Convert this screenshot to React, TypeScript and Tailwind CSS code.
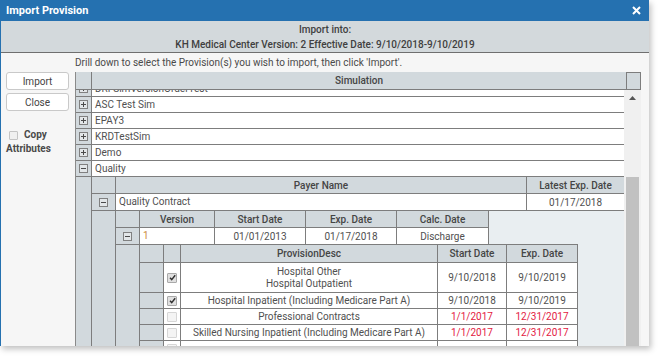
import React from "react";

const L = "border-[#7d7d7d]";
const G = "bg-[#d2d9dd]";

function Exp({ minus = false }: { minus?: boolean }) {
  return (
    <svg width="9" height="9" viewBox="0 0 9 9" className="block">
      <rect x="0.5" y="0.5" width="8" height="8" fill="#e2e6e8" stroke="#808080" />
      <path d="M2 4.5H7" stroke="#4a4a4a" />
      {!minus && <path d="M4.5 2V7" stroke="#4a4a4a" />}
    </svg>
  );
}

function Box({ checked }: { checked: boolean }) {
  return checked ? (
    <span className="w-[10px] h-[10px] rounded-[1px] border border-[#a9a9a9] bg-[#e0e0e0] flex items-center justify-center">
      <svg width="7" height="7" viewBox="0 0 7 7" className="block">
        <path d="M1 3.8L2.7 5.6L6.2 1.2" fill="none" stroke="#2f2f2f" strokeWidth="1.4" />
      </svg>
    </span>
  ) : (
    <span className="w-[10px] h-[10px] rounded-[1px] border border-[#d6d6d6] bg-[#f4f4f4]" />
  );
}

function SimRow({ label, minus = false }: { label: string; minus?: boolean }) {
  return (
    <div className={`flex h-[16px] shrink-0 border-b ${L}`}>
      <div className={`w-[16px] shrink-0 ${G} border-r ${L} flex items-center justify-center`}>
        <Exp minus={minus} />
      </div>
      <div className="flex-1 bg-white pl-[3px] leading-[15px] whitespace-nowrap overflow-hidden">{label}</div>
    </div>
  );
}

type Prov = { desc: React.ReactNode; start: string; exp: string; checked: boolean; red?: boolean; h: string };

function ProvRow({ p }: { p: Prov }) {
  const dateCls = p.red ? "text-[#e3203f]" : "text-[#505050]";
  return (
    <div className={`flex ${p.h} border-b ${L}`}>
      <div className={`w-[24px] shrink-0 ${G} border-r ${L}`} />
      <div className={`w-[17px] shrink-0 bg-white border-r ${L} flex items-center justify-center`}>
        <Box checked={p.checked} />
      </div>
      <div className={`w-[257px] shrink-0 bg-white border-r ${L} flex items-center justify-center text-center leading-[12px] whitespace-nowrap overflow-hidden`}>
        {p.desc}
      </div>
      <div className={`w-[69px] shrink-0 bg-white border-r ${L} flex items-center justify-center ${dateCls}`}>{p.start}</div>
      <div className={`w-[71px] shrink-0 bg-white border-r ${L} flex items-center justify-center ${dateCls}`}>{p.exp}</div>
    </div>
  );
}

function ProvisionTable() {
  const rows: Prov[] = [
    {
      desc: (
        <div>
          <div>Hospital Other</div>
          <div>Hospital Outpatient</div>
        </div>
      ),
      start: "9/10/2018",
      exp: "9/10/2019",
      checked: true,
      h: "h-[30px]",
    },
    { desc: "Hospital Inpatient (Including Medicare Part A)", start: "9/10/2018", exp: "9/10/2019", checked: true, h: "h-[16px]" },
    { desc: "Professional Contracts", start: "1/1/2017", exp: "12/31/2017", checked: false, red: true, h: "h-[16px]" },
    { desc: "Skilled Nursing Inpatient (Including Medicare Part A)", start: "1/1/2017", exp: "12/31/2017", checked: false, red: true, h: "h-[16px]" },
    { desc: "", start: "", exp: "", checked: false, h: "h-[16px]" },
    { desc: "", start: "", exp: "", checked: false, h: "h-[16px]" },
  ];
  return (
    <div className="w-[438px] -mt-px flex flex-col">
      <div className={`flex h-[19px] border-t border-b ${L} ${G} font-medium text-[#454545]`}>
        <div className={`w-[24px] shrink-0 border-r ${L}`} />
        <div className={`w-[17px] shrink-0 border-r ${L}`} />
        <div className={`w-[257px] shrink-0 border-r ${L} flex items-center justify-center`}>ProvisionDesc</div>
        <div className={`w-[69px] shrink-0 border-r ${L} flex items-center justify-center`}>Start Date</div>
        <div className={`w-[71px] shrink-0 border-r ${L} flex items-center justify-center`}>Exp. Date</div>
      </div>
      {rows.map((p, i) => (
        <ProvRow key={i} p={p} />
      ))}
    </div>
  );
}

function VersionTable() {
  return (
    <div className="w-[373px] flex flex-col">
      <div className={`flex h-[17px] border-b ${L} ${G} font-medium text-[#454545]`}>
        <div className={`w-[24px] shrink-0 border-r ${L}`} />
        <div className={`w-[75px] shrink-0 border-r ${L} flex items-center justify-center`}>Version</div>
        <div className={`w-[91px] shrink-0 border-r ${L} flex items-center justify-center`}>Start Date</div>
        <div className={`w-[91px] shrink-0 border-r ${L} flex items-center justify-center`}>Exp. Date</div>
        <div className={`w-[92px] shrink-0 border-r ${L} flex items-center justify-center`}>Calc. Date</div>
      </div>
      <div className={`flex h-[17px] border-b ${L}`}>
        <div className={`w-[24px] shrink-0 ${G} border-r ${L} flex items-center justify-center`}>
          <Exp minus />
        </div>
        <div className={`w-[75px] shrink-0 bg-white border-r ${L} pl-[3px] leading-[16px] text-[#cc8a3c]`}>1</div>
        <div className={`w-[91px] shrink-0 bg-white border-r ${L} flex items-center justify-center`}>01/01/2013</div>
        <div className={`w-[91px] shrink-0 bg-white border-r ${L} flex items-center justify-center`}>01/17/2018</div>
        <div className={`w-[92px] shrink-0 bg-white border-r ${L} flex items-center justify-center`}>Discharge</div>
      </div>
      <div className="flex">
        <div className={`w-[24px] shrink-0 ${G} border-r ${L}`} />
        <ProvisionTable />
      </div>
    </div>
  );
}

function PayerTable() {
  return (
    <div className="flex flex-col">
      <div className={`flex h-[17px] border-b ${L} ${G} font-medium text-[#454545]`}>
        <div className={`w-[24px] shrink-0 border-r ${L}`} />
        <div className={`w-[411px] shrink-0 border-r ${L} flex items-center justify-center`}>Payer Name</div>
        <div className="flex-1 flex items-center justify-center">Latest Exp. Date</div>
      </div>
      <div className={`flex h-[17px] border-b ${L}`}>
        <div className={`w-[24px] shrink-0 ${G} border-r ${L} flex items-center justify-center`}>
          <Exp minus />
        </div>
        <div className={`w-[411px] shrink-0 bg-white border-r ${L} pl-[3px] leading-[16px]`}>Quality Contract</div>
        <div className="flex-1 bg-white flex items-center justify-center">01/17/2018</div>
      </div>
      <div className="flex">
        <div className={`w-[24px] shrink-0 ${G} border-r ${L}`} />
        <VersionTable />
      </div>
    </div>
  );
}

export default function App() {
  return (
    <div className="w-[659px] h-[356px] bg-white font-['Roboto',sans-serif] text-[10px] text-[#505050] overflow-hidden">
      <div className="w-[649px] h-[346px] flex flex-col bg-[#f6f6f6] border-l border-[#2571b0] shadow-[2px_3px_6px_rgba(0,0,0,0.25)] overflow-hidden">
        <div className="h-[21px] shrink-0 bg-[#2571b0] flex items-center justify-between pl-[5px] pr-[8px] text-white">
          <span className="text-[11px] font-bold leading-none">Import Provision</span>
          <svg width="9" height="9" viewBox="0 0 9 9" className="block">
            <path d="M1 1L8 8M8 1L1 8" stroke="#ffffff" strokeWidth="2" />
          </svg>
        </div>
        <div className="h-[32px] shrink-0 bg-[#d3d9dc] border-b border-[#6f6f6f] flex flex-col items-center justify-center leading-[15px] font-medium text-[#404040]">
          <div>Import into:</div>
          <div>KH Medical Center Version: 2 Effective Date: 9/10/2018-9/10/2019</div>
        </div>
        <div className="flex-1 flex min-h-0">
          <div className="w-[74px] shrink-0 pt-[19px] pl-[5px] flex flex-col">
            <button className="w-[63px] h-[18px] bg-white border border-[#c9c9c9] rounded-[3px] text-[10px] text-[#444]">
              Import
            </button>
            <button className="w-[63px] h-[18px] mt-[3px] bg-white border border-[#c9c9c9] rounded-[3px] text-[10px] text-[#444]">
              Close
            </button>
            <div className="mt-[17px] font-bold text-[#4a4a4a] leading-[14px]">
              <div className="flex items-center pl-[3px] gap-[6px]">
                <span className="w-[9px] h-[9px] rounded-[1px] border border-[#c4c4c4] bg-[#f0f0f0]" />
                <span>Copy</span>
              </div>
              <div>Attributes</div>
            </div>
          </div>
          <div className="flex-1 flex flex-col min-h-0">
            <div className="h-[19px] shrink-0 leading-[19px] whitespace-nowrap text-[#4a4a4a]">
              Drill down to select the Provision(s) you wish to import, then click 'Import'.
            </div>
            <div className="w-[566px] flex-1 min-h-0 flex flex-col border-l border-[#8a8a8a]">
              <div className="h-[18px] shrink-0 flex">
                <div className={`w-[550px] flex ${G} border-b ${L} font-medium text-[#454545]`}>
                  <div className={`w-[16px] shrink-0 border-r ${L}`} />
                  <div className="flex-1 flex items-center justify-center">Simulation</div>
                </div>
                <div className={`w-[15px] ${G} border ${L}`} />
              </div>
              <div className="flex-1 min-h-0 flex">
                <div className="w-[548px] overflow-hidden">
                  <div className="-mt-[9px] flex flex-col">
                    <SimRow label="DRFSimVersionOrderTest" />
                    <SimRow label="ASC Test Sim" />
                    <SimRow label="EPAY3" />
                    <SimRow label="KRDTestSim" />
                    <SimRow label="Demo" />
                    <SimRow label="Quality" minus />
                    <div className="flex">
                      <div className={`w-[16px] shrink-0 ${G} border-r ${L}`} />
                      <div className="flex-1 bg-[#e9eef1]">
                        <PayerTable />
                      </div>
                    </div>
                  </div>
                </div>
                <div className="w-[17px] bg-[#f0f0f0] flex flex-col">
                  <div className="h-[87px] shrink-0 flex justify-center pt-[6px]">
                    <svg width="7" height="4" viewBox="0 0 7 4" className="block">
                      <path d="M0 4L3.5 0L7 4Z" fill="#555" />
                    </svg>
                  </div>
                  <div className="ml-[2px] w-[13px] flex-1 bg-[#c1c1c1]" />
                </div>
              </div>
            </div>
          </div>
        </div>
      </div>
    </div>
  );
}
